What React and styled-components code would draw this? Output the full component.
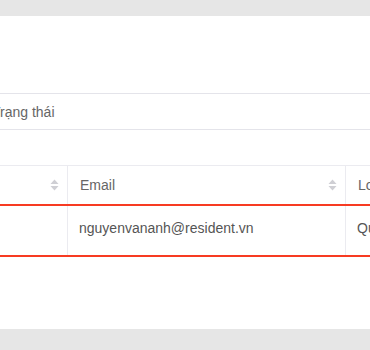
import React from 'react';
import styled, { createGlobalStyle } from 'styled-components';

const GlobalStyle = createGlobalStyle`
  html, body {
    margin: 0;
    padding: 0;
    background: #e6e6e6;
    font-family: "Liberation Sans", Arial, sans-serif;
    overflow: hidden;
  }
`;

const Page = styled.div`
  width: 370px;
  height: 350px;
  overflow: hidden;
  padding-top: 16px;
  box-sizing: border-box;
`;

const Card = styled.div`
  margin-left: -200px;
  width: 800px;
  height: 313px;
  background: #fff;
  padding-top: 77px;
  box-sizing: border-box;
`;

const FilterBox = styled.div`
  height: 37px;
  box-sizing: border-box;
  border-top: 1px solid #e4e4ea;
  border-bottom: 1px solid #e4e4ea;
  display: flex;
  align-items: center;
  padding-left: 192px;
  font-size: 14px;
  color: #666;
`;

const Table = styled.div`
  margin-top: 35px;
`;

const Row = styled.div`
  display: grid;
  grid-template-columns: 267px 278px 1fr;
  height: ${(p) => p.$height}px;
  box-sizing: border-box;
  border-top: ${(p) => (p.$active ? '2px solid #f73b22' : '1px solid #ebebf0')};
  border-bottom: ${(p) => (p.$active ? '2px solid #f73b22' : 'none')};
`;

const Cell = styled.div`
  display: flex;
  align-items: center;
  justify-content: space-between;
  padding: ${(p) => (p.$head ? '0 8px 0 12px' : '0 8px 5px 11px')};
  font-size: 14px;
  color: ${(p) => (p.$head ? '#666' : '#555')};
  border-left: ${(p) => (p.$first ? 'none' : '1px solid #ebebf0')};
  white-space: nowrap;
  overflow: hidden;
`;

const SortIcon = () => (
  <svg width="9" height="12" viewBox="0 0 9 12">
    <path d="M4.5 0.5 L8.5 5 L0.5 5 Z" fill="#cfcfd4" />
    <path d="M4.5 11.5 L8.5 7 L0.5 7 Z" fill="#cfcfd4" />
  </svg>
);

export default function App() {
  return (
    <>
      <GlobalStyle />
      <Page>
        <Card>
          <FilterBox>Trạng thái</FilterBox>
          <Table>
            <Row $height={39}>
              <Cell $head $first>
                <span>Tên</span>
                <SortIcon />
              </Cell>
              <Cell $head>
                <span>Email</span>
                <SortIcon />
              </Cell>
              <Cell $head>
                <span>Loại</span>
                <SortIcon />
              </Cell>
            </Row>
            <Row $active $height={53}>
              <Cell $first>
                <span>Nguyễn Văn Anh</span>
              </Cell>
              <Cell>
                <span>nguyenvananh@resident.vn</span>
              </Cell>
              <Cell>
                <span>Quận 1</span>
              </Cell>
            </Row>
          </Table>
        </Card>
      </Page>
    </>
  );
}
